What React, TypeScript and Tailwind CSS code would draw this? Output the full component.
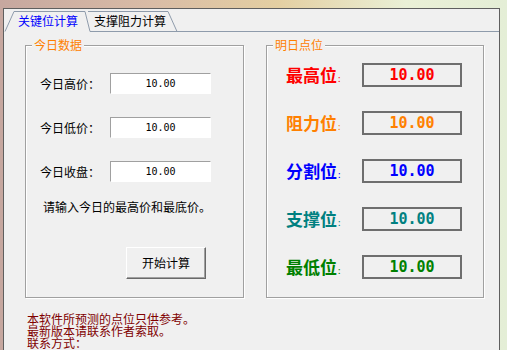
import React from "react";

const leftRows = ["今日高价：", "今日低价：", "今日收盘："];

const rightRows = [
  { label: "最高位", color: "text-[#ff0000]" },
  { label: "阻力位", color: "text-[#ff8000]" },
  { label: "分割位", color: "text-[#0000ff]" },
  { label: "支撑位", color: "text-[#008080]" },
  { label: "最低位", color: "text-[#008000]" },
];

function GroupBox({
  title,
  width,
  children,
}: {
  title: string;
  width: string;
  children: React.ReactNode;
}) {
  return (
    <div
      className={`relative h-[253px] ${width} border border-[#a0a0a0] shadow-[inset_1px_1px_0_#ffffff,1px_1px_0_#ffffff]`}
    >
      <span className="absolute left-[6px] top-[-8px] bg-[#f0f0f0] px-[2px] text-[12px] leading-[14px] text-[#ff8000]">
        {title}
      </span>
      {children}
    </div>
  );
}

export default function App() {
  return (
    <div className="flex h-[350px] w-[507px] overflow-hidden bg-[linear-gradient(90deg,#c6a79f_0%,#d9bca6_30%,#e4cfa2_55%,#eaf0d6_80%,#e4eed6_100%)] font-['Noto_Sans_CJK_SC',sans-serif]">
      <div className="ml-[3px] mt-[8px] flex h-[342px] w-[497px] flex-col border-l border-r border-t border-[#5f5f5f] bg-[#f0f0f0]">
        {/* tab strip */}
        <div className="relative h-[23px] w-full">
          <svg
            className="absolute left-0 top-0"
            width="495"
            height="23"
            viewBox="0 0 495 23"
          >
            <path
              d="M84 2.5 L164 2.5 L173 22.5"
              fill="#f0f0f0"
              stroke="#8e9bab"
              strokeWidth="1"
            />
            <path
              d="M1 22.5 L10 2.5 L81 2.5 L86 22.5"
              fill="#f0f0f0"
              stroke="#8e9bab"
              strokeWidth="1"
            />
            <path d="M86 22.5 L495 22.5" stroke="#8e9bab" strokeWidth="1" />
          </svg>
          <div className="relative flex h-full items-center gap-[16px] pl-[14px] pt-[1px] text-[12px] leading-[14px]">
            <span className="text-[#0000ff]">关键位计算</span>
            <span className="text-black">支撑阻力计算</span>
          </div>
        </div>

        {/* panel */}
        <div className="flex flex-col pl-[21px] pt-[13px]">
          <div className="flex gap-[22px]">
            <GroupBox title="今日数据" width="w-[219px]">
              <div className="flex flex-col pt-[27px]">
                <div className="flex flex-col gap-[23px]">
                  {leftRows.map((l) => (
                    <div key={l} className="flex h-[21px] items-center pl-[14px]">
                      <span className="w-[70px] text-[12px] leading-[14px] text-black">{l}</span>
                      <div className="flex h-[21px] w-[101px] items-center justify-center border border-b-white border-l-[#a0a0a0] border-r-white border-t-[#a0a0a0] bg-white font-['DejaVu_Sans_Mono',monospace] text-[10px] text-black">
                        10.00
                      </div>
                    </div>
                  ))}
                </div>
                <div className="mt-[18px] pl-[17px] text-[12px] leading-[14px] text-black">
                  请输入今日的最高价和最底价。
                </div>
                <div className="ml-[100px] mt-[33px] flex h-[32px] w-[80px] items-center justify-center border border-b-[#696969] border-l-white border-r-[#696969] border-t-white bg-[#f0f0f0] text-[12px] leading-[14px] text-black shadow-[inset_-1px_-1px_0_#a0a0a0]">
                  开始计算
                </div>
              </div>
            </GroupBox>
            <GroupBox title="明日点位" width="w-[218px]">
              <div className="flex flex-col gap-[24px] pl-[19px] pt-[17px]">
                {rightRows.map((r) => (
                  <div key={r.label} className="flex h-[24px] items-center">
                    <span className={`flex w-[76px] items-end text-[17px] font-bold leading-[20px] ${r.color}`}>
                      {r.label}
                      <span className="ml-[1px] text-[9px] font-normal leading-[12px]">:</span>
                    </span>
                    <div
                      className={`flex h-[24px] w-[100px] items-center justify-center border-2 border-[#6e6e6e] font-['DejaVu_Sans_Mono',monospace] text-[15px] font-bold ${r.color}`}
                    >
                      10.00
                    </div>
                  </div>
                ))}
              </div>
            </GroupBox>
          </div>
          <div className="ml-[2px] mt-[15px] flex flex-col text-[12px] leading-[12px] text-[#800000]">
            <span>本软件所预测的点位只供参考。</span>
            <span>最新版本请联系作者索取。</span>
            <span>联系方式：</span>
          </div>
        </div>
      </div>
    </div>
  );
}
